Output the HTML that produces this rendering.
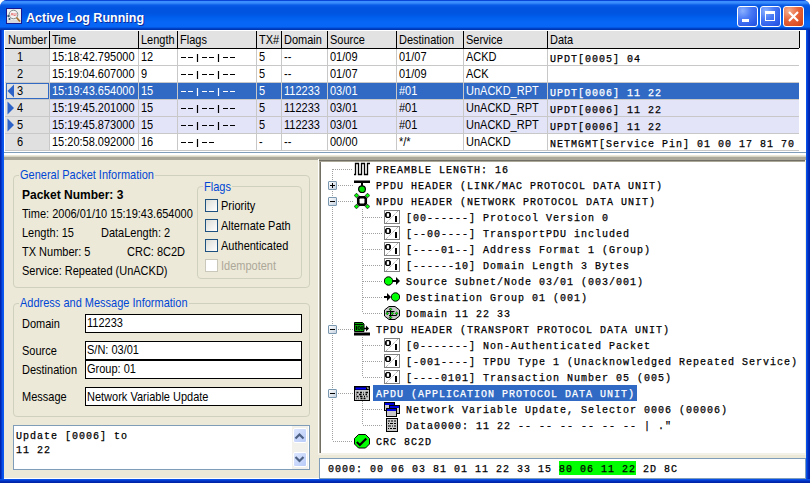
<!DOCTYPE html><html><head><meta charset="utf-8"><style>
*{margin:0;padding:0;box-sizing:border-box}
html,body{width:810px;height:483px;overflow:hidden;background:#fff;font-family:"Liberation Sans",sans-serif;font-size:11px;color:#000}
div,span,svg{position:absolute}
.t{white-space:nowrap;line-height:1}
.s{transform:scaleY(1.12);transform-origin:0 9.3px}
.mono{font-family:"Liberation Mono",monospace;font-size:10px;letter-spacing:1px;-webkit-text-stroke:0.25px}
</style></head><body>
<div style="left:0;top:0;width:810px;height:483px;background:#0842d0;border-radius:7px 7px 0 0"></div>
<div style="left:0;top:0;width:810px;height:30px;border-radius:7px 7px 0 0;background:linear-gradient(#0a46d8 0px,#0a46d8 1px,#3d90ff 1px,#3a8cfc 3px,#0a5ce8 5px,#0054e0 8px,#0054e0 13px,#005eec 17px,#0866f6 22px,#0866f6 27px,#0048d0 28px,#0030a8 30px)"></div>
<div style="left:0;top:30px;width:4px;height:453px;background:linear-gradient(90deg,#0020a8 0,#0028b8 1px,#0848e0 2px,#0a58f0 3px,#0a58f0 4px)"></div>
<div style="left:806px;top:30px;width:4px;height:453px;background:linear-gradient(90deg,#0a58f0 0,#0848e0 1px,#0030c0 2px,#0020a8 4px)"></div>
<div style="left:0;top:479px;width:810px;height:4px;background:linear-gradient(#0a58f0 0,#0848e0 1px,#0030c0 2px,#0020a0 4px)"></div>
<svg style="left:6px;top:8px" width="16" height="16"><rect x="0.5" y="0.5" width="15" height="15" fill="#eef0f0" stroke="#1a1a90"/><rect x="1" y="12" width="14" height="3" fill="#d8d8dc"/><circle cx="2.5" cy="8" r="1.2" fill="#3a5a70"/><circle cx="3.5" cy="11" r="1" fill="#2a4a6a"/><circle cx="7.5" cy="6.5" r="4.3" fill="#f4f4f4" stroke="#808888" stroke-width="1"/><path d="M5 7.5l1-2.5 1 2.5M8 5v2.5h1.5M10 5v2.5" stroke="#e05050" stroke-width="0.7" fill="none"/><path d="M10.5 9.5L14 13.5" stroke="#a8702e" stroke-width="1.8"/></svg>
<div class="t" style="left:26px;top:12px;color:#fff;font-weight:bold;font-size:12.5px;text-shadow:1px 1px 0 #0b2a9a">Active Log Running</div>
<div style="left:737px;top:6px;width:21px;height:21px;border:1px solid #fff;border-radius:3px;background:radial-gradient(circle at 25% 20%,#8ab0ff,#4a7af5 40%,#2a5ae8 80%,#2050d8)"></div>
<div style="left:760px;top:6px;width:21px;height:21px;border:1px solid #fff;border-radius:3px;background:radial-gradient(circle at 25% 20%,#8ab0ff,#4a7af5 40%,#2a5ae8 80%,#2050d8)"></div>
<div style="left:742px;top:19px;width:7px;height:3px;background:#fff"></div>
<div style="left:765px;top:11px;width:10px;height:10px;border:1px solid #fff;border-top-width:3px"></div>
<div style="left:783px;top:6px;width:21px;height:21px;border:1px solid #fff;border-radius:3px;background:radial-gradient(circle at 25% 20%,#f5b090,#e8643a 45%,#d84a1e 85%,#c83c14)"></div>
<svg style="left:783px;top:6px" width="21" height="21"><path d="M6 6L15 15M15 6L6 15" stroke="#fff" stroke-width="2.2"/></svg>
<div style="left:4px;top:30px;width:802px;height:449px;background:#ece9d8"></div>
<div style="left:4px;top:478px;width:802px;height:1px;background:#fff"></div>
<div style="left:4px;top:30px;width:802px;height:123px;background:#fff"></div>
<div style="left:4px;top:152px;width:802px;height:1px;background:#7f9db9"></div>
<div style="left:5px;top:31px;width:794px;height:17px;background:#e2e2e2"></div>
<div style="left:5px;top:48px;width:794px;height:1px;background:#000"></div>
<div style="left:49px;top:31px;width:1px;height:17px;background:#000"></div>
<div class="t s" style="left:8px;top:35px">Number</div>
<div style="left:138px;top:31px;width:1px;height:17px;background:#000"></div>
<div class="t s" style="left:52px;top:35px">Time</div>
<div style="left:177px;top:31px;width:1px;height:17px;background:#000"></div>
<div class="t s" style="left:141px;top:35px">Length</div>
<div style="left:256px;top:31px;width:1px;height:17px;background:#000"></div>
<div class="t s" style="left:180px;top:35px">Flags</div>
<div style="left:281px;top:31px;width:1px;height:17px;background:#000"></div>
<div class="t s" style="left:259px;top:35px">TX#</div>
<div style="left:327px;top:31px;width:1px;height:17px;background:#000"></div>
<div class="t s" style="left:284px;top:35px">Domain</div>
<div style="left:396px;top:31px;width:1px;height:17px;background:#000"></div>
<div class="t s" style="left:330px;top:35px">Source</div>
<div style="left:463px;top:31px;width:1px;height:17px;background:#000"></div>
<div class="t s" style="left:399px;top:35px">Destination</div>
<div style="left:547px;top:31px;width:1px;height:17px;background:#000"></div>
<div class="t s" style="left:466px;top:35px">Service</div>
<div style="left:799px;top:31px;width:1px;height:17px;background:#000"></div>
<div class="t s" style="left:550px;top:35px">Data</div>
<div style="left:49px;top:49px;width:750px;height:16px;background:#fff"></div>
<div style="left:5px;top:49px;width:44px;height:16px;background:#e0e0e0"></div>
<div style="left:5px;top:65px;width:794px;height:1px;background:#c8c8c8"></div>
<div style="left:49px;top:49px;width:1px;height:16px;background:#c8c8c8"></div>
<div style="left:138px;top:49px;width:1px;height:16px;background:#c8c8c8"></div>
<div style="left:177px;top:49px;width:1px;height:16px;background:#c8c8c8"></div>
<div style="left:256px;top:49px;width:1px;height:16px;background:#c8c8c8"></div>
<div style="left:281px;top:49px;width:1px;height:16px;background:#c8c8c8"></div>
<div style="left:327px;top:49px;width:1px;height:16px;background:#c8c8c8"></div>
<div style="left:396px;top:49px;width:1px;height:16px;background:#c8c8c8"></div>
<div style="left:463px;top:49px;width:1px;height:16px;background:#c8c8c8"></div>
<div style="left:547px;top:49px;width:1px;height:16px;background:#c8c8c8"></div>
<div class="t s" style="left:17px;top:52px">1</div>
<div class="t s" style="left:52px;top:52px;color:#000">15:18:42.795000</div>
<div class="t s" style="left:141px;top:52px;color:#000">12</div>
<svg style="left:177px;top:49px" width="70" height="16"><path d="M4 8.5h5M11 8.5h5M25 8.5h5M32 8.5h5M46 8.5h5M53 8.5h5M20.5 5v8M41.5 5v8" stroke="#000" stroke-width="1.2"/></svg>
<div class="t s" style="left:259px;top:52px;color:#000">5</div>
<div class="t s" style="left:284px;top:52px;color:#000">--</div>
<div class="t s" style="left:330px;top:52px;color:#000">01/09</div>
<div class="t s" style="left:399px;top:52px;color:#000">01/07</div>
<div class="t s" style="left:466px;top:52px;color:#000">ACKD</div>
<div class="t mono" style="left:550px;top:55px;color:#000">UPDT[0005] 04</div>
<div style="left:49px;top:66px;width:750px;height:16px;background:#fff"></div>
<div style="left:5px;top:66px;width:44px;height:16px;background:#e0e0e0"></div>
<div style="left:5px;top:82px;width:794px;height:1px;background:#c8c8c8"></div>
<div style="left:49px;top:66px;width:1px;height:16px;background:#c8c8c8"></div>
<div style="left:138px;top:66px;width:1px;height:16px;background:#c8c8c8"></div>
<div style="left:177px;top:66px;width:1px;height:16px;background:#c8c8c8"></div>
<div style="left:256px;top:66px;width:1px;height:16px;background:#c8c8c8"></div>
<div style="left:281px;top:66px;width:1px;height:16px;background:#c8c8c8"></div>
<div style="left:327px;top:66px;width:1px;height:16px;background:#c8c8c8"></div>
<div style="left:396px;top:66px;width:1px;height:16px;background:#c8c8c8"></div>
<div style="left:463px;top:66px;width:1px;height:16px;background:#c8c8c8"></div>
<div style="left:547px;top:66px;width:1px;height:16px;background:#c8c8c8"></div>
<div class="t s" style="left:17px;top:69px">2</div>
<div class="t s" style="left:52px;top:69px;color:#000">15:19:04.607000</div>
<div class="t s" style="left:141px;top:69px;color:#000">9</div>
<svg style="left:177px;top:66px" width="70" height="16"><path d="M4 8.5h5M11 8.5h5M25 8.5h5M32 8.5h5M46 8.5h5M53 8.5h5M20.5 5v8M41.5 5v8" stroke="#000" stroke-width="1.2"/></svg>
<div class="t s" style="left:259px;top:69px;color:#000">5</div>
<div class="t s" style="left:284px;top:69px;color:#000">--</div>
<div class="t s" style="left:330px;top:69px;color:#000">01/07</div>
<div class="t s" style="left:399px;top:69px;color:#000">01/09</div>
<div class="t s" style="left:466px;top:69px;color:#000">ACK</div>
<div class="t mono" style="left:550px;top:72px;color:#000"></div>
<div style="left:49px;top:83px;width:750px;height:16px;background:#316ac5"></div>
<div style="left:5px;top:83px;width:44px;height:16px;background:#e0e0e0"></div>
<div style="left:6px;top:83px;width:43px;height:16px;border:1px solid #316ac5"></div>
<div style="left:5px;top:99px;width:794px;height:1px;background:#c8c8c8"></div>
<div style="left:49px;top:83px;width:1px;height:16px;background:#c8c8c8"></div>
<div style="left:138px;top:83px;width:1px;height:16px;background:#c8c8c8"></div>
<div style="left:177px;top:83px;width:1px;height:16px;background:#c8c8c8"></div>
<div style="left:256px;top:83px;width:1px;height:16px;background:#c8c8c8"></div>
<div style="left:281px;top:83px;width:1px;height:16px;background:#c8c8c8"></div>
<div style="left:327px;top:83px;width:1px;height:16px;background:#c8c8c8"></div>
<div style="left:396px;top:83px;width:1px;height:16px;background:#c8c8c8"></div>
<div style="left:463px;top:83px;width:1px;height:16px;background:#c8c8c8"></div>
<div style="left:547px;top:83px;width:1px;height:16px;background:#c8c8c8"></div>
<div class="t s" style="left:17px;top:86px">3</div>
<svg style="left:7px;top:83px" width="8" height="16"><path d="M7 1.5L7 14.5L0.5 8Z" fill="#2d63c8"/></svg>
<div class="t s" style="left:52px;top:86px;color:#fff">15:19:43.654000</div>
<div class="t s" style="left:141px;top:86px;color:#fff">15</div>
<svg style="left:177px;top:83px" width="70" height="16"><path d="M4 8.5h5M11 8.5h5M25 8.5h5M32 8.5h5M46 8.5h5M53 8.5h5M20.5 5v8M41.5 5v8" stroke="#fff" stroke-width="1.2"/></svg>
<div class="t s" style="left:259px;top:86px;color:#fff">5</div>
<div class="t s" style="left:284px;top:86px;color:#fff">112233</div>
<div class="t s" style="left:330px;top:86px;color:#fff">03/01</div>
<div class="t s" style="left:399px;top:86px;color:#fff">#01</div>
<div class="t s" style="left:466px;top:86px;color:#fff">UnACKD_RPT</div>
<div class="t mono" style="left:550px;top:89px;color:#fff">UPDT[0006] 11 22</div>
<div style="left:49px;top:100px;width:750px;height:16px;background:#e4e4f8"></div>
<div style="left:5px;top:100px;width:44px;height:16px;background:#e0e0e0"></div>
<div style="left:5px;top:116px;width:794px;height:1px;background:#c8c8c8"></div>
<div style="left:49px;top:100px;width:1px;height:16px;background:#c8c8c8"></div>
<div style="left:138px;top:100px;width:1px;height:16px;background:#c8c8c8"></div>
<div style="left:177px;top:100px;width:1px;height:16px;background:#c8c8c8"></div>
<div style="left:256px;top:100px;width:1px;height:16px;background:#c8c8c8"></div>
<div style="left:281px;top:100px;width:1px;height:16px;background:#c8c8c8"></div>
<div style="left:327px;top:100px;width:1px;height:16px;background:#c8c8c8"></div>
<div style="left:396px;top:100px;width:1px;height:16px;background:#c8c8c8"></div>
<div style="left:463px;top:100px;width:1px;height:16px;background:#c8c8c8"></div>
<div style="left:547px;top:100px;width:1px;height:16px;background:#c8c8c8"></div>
<div class="t s" style="left:17px;top:103px">4</div>
<svg style="left:7px;top:100px" width="8" height="16"><path d="M0.5 1.5L0.5 14.5L7 8Z" fill="#2d63c8"/></svg>
<div class="t s" style="left:52px;top:103px;color:#000">15:19:45.201000</div>
<div class="t s" style="left:141px;top:103px;color:#000">15</div>
<svg style="left:177px;top:100px" width="70" height="16"><path d="M4 8.5h5M11 8.5h5M25 8.5h5M32 8.5h5M46 8.5h5M53 8.5h5M20.5 5v8M41.5 5v8" stroke="#000" stroke-width="1.2"/></svg>
<div class="t s" style="left:259px;top:103px;color:#000">5</div>
<div class="t s" style="left:284px;top:103px;color:#000">112233</div>
<div class="t s" style="left:330px;top:103px;color:#000">03/01</div>
<div class="t s" style="left:399px;top:103px;color:#000">#01</div>
<div class="t s" style="left:466px;top:103px;color:#000">UnACKD_RPT</div>
<div class="t mono" style="left:550px;top:106px;color:#000">UPDT[0006] 11 22</div>
<div style="left:49px;top:117px;width:750px;height:16px;background:#e4e4f8"></div>
<div style="left:5px;top:117px;width:44px;height:16px;background:#e0e0e0"></div>
<div style="left:5px;top:133px;width:794px;height:1px;background:#c8c8c8"></div>
<div style="left:49px;top:117px;width:1px;height:16px;background:#c8c8c8"></div>
<div style="left:138px;top:117px;width:1px;height:16px;background:#c8c8c8"></div>
<div style="left:177px;top:117px;width:1px;height:16px;background:#c8c8c8"></div>
<div style="left:256px;top:117px;width:1px;height:16px;background:#c8c8c8"></div>
<div style="left:281px;top:117px;width:1px;height:16px;background:#c8c8c8"></div>
<div style="left:327px;top:117px;width:1px;height:16px;background:#c8c8c8"></div>
<div style="left:396px;top:117px;width:1px;height:16px;background:#c8c8c8"></div>
<div style="left:463px;top:117px;width:1px;height:16px;background:#c8c8c8"></div>
<div style="left:547px;top:117px;width:1px;height:16px;background:#c8c8c8"></div>
<div class="t s" style="left:17px;top:120px">5</div>
<svg style="left:7px;top:117px" width="8" height="16"><path d="M0.5 1.5L0.5 14.5L7 8Z" fill="#2d63c8"/></svg>
<div class="t s" style="left:52px;top:120px;color:#000">15:19:45.873000</div>
<div class="t s" style="left:141px;top:120px;color:#000">15</div>
<svg style="left:177px;top:117px" width="70" height="16"><path d="M4 8.5h5M11 8.5h5M25 8.5h5M32 8.5h5M46 8.5h5M53 8.5h5M20.5 5v8M41.5 5v8" stroke="#000" stroke-width="1.2"/></svg>
<div class="t s" style="left:259px;top:120px;color:#000">5</div>
<div class="t s" style="left:284px;top:120px;color:#000">112233</div>
<div class="t s" style="left:330px;top:120px;color:#000">03/01</div>
<div class="t s" style="left:399px;top:120px;color:#000">#01</div>
<div class="t s" style="left:466px;top:120px;color:#000">UnACKD_RPT</div>
<div class="t mono" style="left:550px;top:123px;color:#000">UPDT[0006] 11 22</div>
<div style="left:49px;top:134px;width:750px;height:16px;background:#fff"></div>
<div style="left:5px;top:134px;width:44px;height:16px;background:#e0e0e0"></div>
<div style="left:5px;top:150px;width:794px;height:1px;background:#c8c8c8"></div>
<div style="left:49px;top:134px;width:1px;height:16px;background:#c8c8c8"></div>
<div style="left:138px;top:134px;width:1px;height:16px;background:#c8c8c8"></div>
<div style="left:177px;top:134px;width:1px;height:16px;background:#c8c8c8"></div>
<div style="left:256px;top:134px;width:1px;height:16px;background:#c8c8c8"></div>
<div style="left:281px;top:134px;width:1px;height:16px;background:#c8c8c8"></div>
<div style="left:327px;top:134px;width:1px;height:16px;background:#c8c8c8"></div>
<div style="left:396px;top:134px;width:1px;height:16px;background:#c8c8c8"></div>
<div style="left:463px;top:134px;width:1px;height:16px;background:#c8c8c8"></div>
<div style="left:547px;top:134px;width:1px;height:16px;background:#c8c8c8"></div>
<div class="t s" style="left:17px;top:137px">6</div>
<div class="t s" style="left:52px;top:137px;color:#000">15:20:58.092000</div>
<div class="t s" style="left:141px;top:137px;color:#000">16</div>
<svg style="left:177px;top:134px" width="70" height="16"><path d="M4 8.5h5M11 8.5h5M25 8.5h5M32 8.5h5M20.5 5v8" stroke="#000" stroke-width="1.2"/></svg>
<div class="t s" style="left:259px;top:137px;color:#000">-</div>
<div class="t s" style="left:284px;top:137px;color:#000">--</div>
<div class="t s" style="left:330px;top:137px;color:#000">00/00</div>
<div class="t s" style="left:399px;top:137px;color:#000">*/*</div>
<div class="t s" style="left:466px;top:137px;color:#000">UnACKD</div>
<div class="t mono" style="left:550px;top:140px;color:#000">NETMGMT[Service Pin] 01 00 17 81 70</div>
<div style="left:4px;top:153px;width:802px;height:2px;background:#fff"></div>
<div style="left:4px;top:156px;width:802px;height:1px;background:#d8d4c4"></div>
<div style="left:4px;top:157px;width:802px;height:3px;background:#aca899"></div>
<div style="left:13px;top:175px;width:297px;height:113px;border:1px solid #d0d0bf;border-radius:4px"></div>
<div class="t s" style="left:19px;top:170px;padding:0 1px;background:#ece9d8;color:#0046d5">General Packet Information</div>
<div class="t" style="left:22px;top:189px;font-weight:bold;font-size:12px">Packet Number: 3</div>
<div class="t s" style="left:22px;top:209px">Time: 2006/01/10 15:19:43.654000</div>
<div class="t s" style="left:22px;top:228px">Length: 15</div>
<div class="t s" style="left:101px;top:228px">DataLength: 2</div>
<div class="t s" style="left:22px;top:247px">TX Number: 5</div>
<div class="t s" style="left:127px;top:247px">CRC: 8C2D</div>
<div class="t s" style="left:22px;top:266px">Service: Repeated (UnACKD)</div>
<div style="left:197px;top:186px;width:105px;height:93px;border:1px solid #d0d0bf;border-radius:4px"></div>
<div class="t s" style="left:203px;top:182px;padding:0 1px;background:#ece9d8;color:#0046d5">Flags</div>
<div style="left:205px;top:199px;width:13px;height:13px;border:1px solid #1c5180;background:linear-gradient(135deg,#dcdcd7,#fff)"></div>
<div class="t s" style="left:221px;top:201px;color:#000">Priority</div>
<div style="left:205px;top:219px;width:13px;height:13px;border:1px solid #1c5180;background:linear-gradient(135deg,#dcdcd7,#fff)"></div>
<div class="t s" style="left:221px;top:221px;color:#000">Alternate Path</div>
<div style="left:205px;top:239px;width:13px;height:13px;border:1px solid #1c5180;background:linear-gradient(135deg,#dcdcd7,#fff)"></div>
<div class="t s" style="left:221px;top:241px;color:#000">Authenticated</div>
<div style="left:205px;top:259px;width:13px;height:13px;border:1px solid #cac8bb;background:#fff"></div>
<div class="t s" style="left:221px;top:261px;color:#aca899">Idempotent</div>
<div style="left:13px;top:303px;width:297px;height:114px;border:1px solid #d0d0bf;border-radius:4px"></div>
<div class="t s" style="left:19px;top:298px;padding:0 1px;background:#ece9d8;color:#0046d5">Address and Message Information</div>
<div class="t s" style="left:22px;top:319px">Domain</div>
<div style="left:85px;top:314px;width:217px;height:19px;background:#fff;border:1px solid #000"></div>
<div class="t s" style="left:87px;top:318px">112233</div>
<div class="t s" style="left:22px;top:346px">Source</div>
<div style="left:85px;top:341px;width:217px;height:19px;background:#fff;border:1px solid #000"></div>
<div class="t s" style="left:87px;top:345px">S/N: 03/01</div>
<div class="t s" style="left:22px;top:365px">Destination</div>
<div style="left:85px;top:360px;width:217px;height:19px;background:#fff;border:1px solid #000"></div>
<div class="t s" style="left:87px;top:364px">Group: 01</div>
<div class="t s" style="left:22px;top:392px">Message</div>
<div style="left:85px;top:387px;width:217px;height:19px;background:#fff;border:1px solid #000"></div>
<div class="t s" style="left:87px;top:392px">Network Variable Update</div>
<div style="left:13px;top:425px;width:297px;height:45px;background:#fff;border:1px solid #7f9db9"></div>
<div class="t mono" style="left:16px;top:430px;line-height:14px">Update [0006] to<br>11 22</div>
<div style="left:292px;top:426px;width:16px;height:43px;background:#f3f1ec"></div>
<div style="left:293px;top:428px;width:14px;height:15px;border:1px solid #fff;border-radius:2px;background:linear-gradient(135deg,#dce6fe,#b8cbf8)"></div>
<svg style="left:293px;top:428px" width="14" height="15"><path d="M2.5 10.5L6.5 6.5L10.5 10.5" stroke="#4d6185" stroke-width="2.2" fill="none"/></svg>
<div style="left:293px;top:452px;width:14px;height:15px;border:1px solid #fff;border-radius:2px;background:linear-gradient(135deg,#dce6fe,#b8cbf8)"></div>
<svg style="left:293px;top:452px" width="14" height="15"><path d="M2.5 5L6.5 9L10.5 5" stroke="#4d6185" stroke-width="2.2" fill="none"/></svg>
<div style="left:319px;top:160px;width:487px;height:293px;background:#fff;border-left:2px solid #716f64;border-top:1px solid #716f64"></div>
<div style="left:320px;top:161px;width:486px;height:1px;background:#aca899"></div>
<div style="left:318px;top:159px;width:1px;height:296px;background:#fff"></div>
<div style="left:318px;top:453px;width:488px;height:2px;background:#f4f2e8"></div>
<div style="left:805px;top:160px;width:1px;height:294px;background:#f1efe2"></div>
<div style="left:319px;top:161px;width:1px;height:292px;background:#aca899"></div>
<div style="left:319px;top:458px;width:487px;height:21px;background:#fff;border:1px solid #7f9db9"></div>
<div style="left:559px;top:461px;width:77px;height:14px;background:#00ff00"></div>
<div class="t mono" style="left:328px;top:465px">0000: 00 06 03 81 01 11 22 33 15 80 06 11 22 2D 8C</div>
<div style="left:332px;top:169px;width:1px;height:272px;background:repeating-linear-gradient(#a0a0a0 0 1px,transparent 1px 2px)"></div>
<div style="left:333px;top:169px;width:20px;height:1px;background:repeating-linear-gradient(90deg,#a0a0a0 0 1px,transparent 1px 2px)"></div>
<div style="left:338px;top:185px;width:15px;height:1px;background:repeating-linear-gradient(90deg,#a0a0a0 0 1px,transparent 1px 2px)"></div>
<div style="left:338px;top:201px;width:15px;height:1px;background:repeating-linear-gradient(90deg,#a0a0a0 0 1px,transparent 1px 2px)"></div>
<div style="left:363px;top:217px;width:20px;height:1px;background:repeating-linear-gradient(90deg,#a0a0a0 0 1px,transparent 1px 2px)"></div>
<div style="left:363px;top:233px;width:20px;height:1px;background:repeating-linear-gradient(90deg,#a0a0a0 0 1px,transparent 1px 2px)"></div>
<div style="left:363px;top:249px;width:20px;height:1px;background:repeating-linear-gradient(90deg,#a0a0a0 0 1px,transparent 1px 2px)"></div>
<div style="left:363px;top:265px;width:20px;height:1px;background:repeating-linear-gradient(90deg,#a0a0a0 0 1px,transparent 1px 2px)"></div>
<div style="left:363px;top:281px;width:20px;height:1px;background:repeating-linear-gradient(90deg,#a0a0a0 0 1px,transparent 1px 2px)"></div>
<div style="left:363px;top:297px;width:20px;height:1px;background:repeating-linear-gradient(90deg,#a0a0a0 0 1px,transparent 1px 2px)"></div>
<div style="left:363px;top:313px;width:20px;height:1px;background:repeating-linear-gradient(90deg,#a0a0a0 0 1px,transparent 1px 2px)"></div>
<div style="left:338px;top:329px;width:15px;height:1px;background:repeating-linear-gradient(90deg,#a0a0a0 0 1px,transparent 1px 2px)"></div>
<div style="left:363px;top:345px;width:20px;height:1px;background:repeating-linear-gradient(90deg,#a0a0a0 0 1px,transparent 1px 2px)"></div>
<div style="left:363px;top:361px;width:20px;height:1px;background:repeating-linear-gradient(90deg,#a0a0a0 0 1px,transparent 1px 2px)"></div>
<div style="left:363px;top:377px;width:20px;height:1px;background:repeating-linear-gradient(90deg,#a0a0a0 0 1px,transparent 1px 2px)"></div>
<div style="left:338px;top:393px;width:15px;height:1px;background:repeating-linear-gradient(90deg,#a0a0a0 0 1px,transparent 1px 2px)"></div>
<div style="left:363px;top:409px;width:20px;height:1px;background:repeating-linear-gradient(90deg,#a0a0a0 0 1px,transparent 1px 2px)"></div>
<div style="left:363px;top:425px;width:20px;height:1px;background:repeating-linear-gradient(90deg,#a0a0a0 0 1px,transparent 1px 2px)"></div>
<div style="left:333px;top:441px;width:20px;height:1px;background:repeating-linear-gradient(90deg,#a0a0a0 0 1px,transparent 1px 2px)"></div>
<div style="left:362px;top:209px;width:1px;height:104px;background:repeating-linear-gradient(#a0a0a0 0 1px,transparent 1px 2px)"></div>
<div style="left:362px;top:337px;width:1px;height:40px;background:repeating-linear-gradient(#a0a0a0 0 1px,transparent 1px 2px)"></div>
<div style="left:362px;top:401px;width:1px;height:24px;background:repeating-linear-gradient(#a0a0a0 0 1px,transparent 1px 2px)"></div>
<div class="t mono" style="left:376px;top:166px">PREAMBLE LENGTH: 16</div>
<svg style="left:354px;top:162px" width="16" height="16"><path d="M0 12.5H1.5V1.5H4.5V12.5H7.5V1.5H10.5V12.5H13.5V1.5H16" stroke="#000" stroke-width="1.3" fill="none"/></svg>
<div class="t mono" style="left:376px;top:182px">PPDU HEADER (LINK/MAC PROTOCOL DATA UNIT)</div>
<svg style="left:354px;top:177px" width="16" height="16"><rect x="0" y="3.5" width="16" height="2.5" fill="#000"/><rect x="7" y="5" width="2" height="4" fill="#000"/><circle cx="8" cy="12.2" r="3.4" fill="#00e000" stroke="#000" stroke-width="1.2"/></svg>
<div style="left:328px;top:181px;width:9px;height:9px;border:1px solid #7a98af;border-radius:1px;background:linear-gradient(135deg,#fff,#c6d2e0)"></div>
<div style="left:330px;top:185px;width:5px;height:1px;background:#000"></div>
<div style="left:332px;top:183px;width:1px;height:5px;background:#000"></div>
<div class="t mono" style="left:376px;top:198px">NPDU HEADER (NETWORK PROTOCOL DATA UNIT)</div>
<svg style="left:354px;top:193px" width="16" height="16"><path d="M5.5 4.25H10.5L11.75 5.5V10.5L10.5 11.75H5.5L4.25 10.5V5.5Z" fill="#fff" stroke="#000" stroke-width="2.6"/><path d="M2.5 0.20000000000000018L4.8 2.5L2.5 4.8L0.20000000000000018 2.5Z" fill="#00ff00" stroke="#000" stroke-width="0.7"/><path d="M13.5 0.20000000000000018L15.8 2.5L13.5 4.8L11.2 2.5Z" fill="#00ff00" stroke="#000" stroke-width="0.7"/><path d="M2.5 11.2L4.8 13.5L2.5 15.8L0.20000000000000018 13.5Z" fill="#00ff00" stroke="#000" stroke-width="0.7"/><path d="M13.5 11.2L15.8 13.5L13.5 15.8L11.2 13.5Z" fill="#00ff00" stroke="#000" stroke-width="0.7"/></svg>
<div style="left:328px;top:197px;width:9px;height:9px;border:1px solid #7a98af;border-radius:1px;background:linear-gradient(135deg,#fff,#c6d2e0)"></div>
<div style="left:330px;top:201px;width:5px;height:1px;background:#000"></div>
<div class="t mono" style="left:406px;top:214px">[00------] Protocol Version 0</div>
<svg style="left:384px;top:210px" width="16" height="16"><rect x="0.5" y="0.5" width="15" height="13" fill="#fff" stroke="#808080"/><path d="M2 13L14 1" stroke="#909090" stroke-dasharray="1 1"/><path d="M2.5 2H5.5L7 3.5V6.5L5.5 8H2.5L1 6.5V3.5ZM2.8 3.2V6.8H5.1V3.2Z" fill="#000" fill-rule="evenodd"/><rect x="11" y="6" width="2" height="6" fill="#000"/></svg>
<div class="t mono" style="left:406px;top:230px">[--00----] TransportPDU included</div>
<svg style="left:384px;top:226px" width="16" height="16"><rect x="0.5" y="0.5" width="15" height="13" fill="#fff" stroke="#808080"/><path d="M2 13L14 1" stroke="#909090" stroke-dasharray="1 1"/><path d="M2.5 2H5.5L7 3.5V6.5L5.5 8H2.5L1 6.5V3.5ZM2.8 3.2V6.8H5.1V3.2Z" fill="#000" fill-rule="evenodd"/><rect x="11" y="6" width="2" height="6" fill="#000"/></svg>
<div class="t mono" style="left:406px;top:246px">[----01--] Address Format 1 (Group)</div>
<svg style="left:384px;top:242px" width="16" height="16"><rect x="0.5" y="0.5" width="15" height="13" fill="#fff" stroke="#808080"/><path d="M2 13L14 1" stroke="#909090" stroke-dasharray="1 1"/><path d="M2.5 2H5.5L7 3.5V6.5L5.5 8H2.5L1 6.5V3.5ZM2.8 3.2V6.8H5.1V3.2Z" fill="#000" fill-rule="evenodd"/><rect x="11" y="6" width="2" height="6" fill="#000"/></svg>
<div class="t mono" style="left:406px;top:262px">[------10] Domain Length 3 Bytes</div>
<svg style="left:384px;top:258px" width="16" height="16"><rect x="0.5" y="0.5" width="15" height="13" fill="#fff" stroke="#808080"/><path d="M2 13L14 1" stroke="#909090" stroke-dasharray="1 1"/><path d="M2.5 2H5.5L7 3.5V6.5L5.5 8H2.5L1 6.5V3.5ZM2.8 3.2V6.8H5.1V3.2Z" fill="#000" fill-rule="evenodd"/><rect x="11" y="6" width="2" height="6" fill="#000"/></svg>
<div class="t mono" style="left:406px;top:278px">Source Subnet/Node 03/01 (003/001)</div>
<svg style="left:384px;top:273px" width="16" height="16"><circle cx="4.5" cy="8" r="4.2" fill="#00ff00" stroke="#000" stroke-width="1"/><rect x="9" y="7" width="3" height="2" fill="#000"/><path d="M12 4L16 8L12 12Z" fill="#000"/></svg>
<div class="t mono" style="left:406px;top:294px">Destination Group 01 (001)</div>
<svg style="left:384px;top:289px" width="16" height="16"><rect x="0" y="7" width="4" height="2" fill="#000"/><path d="M3 4L7 8L3 12Z" fill="#000"/><circle cx="11.5" cy="8" r="4.2" fill="#00ff00" stroke="#000" stroke-width="1"/></svg>
<div class="t mono" style="left:406px;top:310px">Domain 11 22 33</div>
<svg style="left:384px;top:305px" width="16" height="16"><path d="M5 1.5H11L15.5 5V11L11 14.5H5L0.5 11V5Z" fill="#c8c8c8" stroke="#000"/><path d="M2.5 6.5H10.5M5 10.5H12.5M6.5 4V14M12.5 8.5V10.5" stroke="#000" stroke-width="1.1"/><path d="M6.5 2.9L7.9 4.3L6.5 5.699999999999999L5.1 4.3Z" fill="#00ff00" stroke="#000" stroke-width="0.6"/><path d="M3.3 7.0L4.699999999999999 8.4L3.3 9.8L1.9 8.4Z" fill="#00ff00" stroke="#000" stroke-width="0.6"/><path d="M8.3 7.0L9.700000000000001 8.4L8.3 9.8L6.9 8.4Z" fill="#00ff00" stroke="#000" stroke-width="0.6"/><path d="M12.6 7.0L14.0 8.4L12.6 9.8L11.2 8.4Z" fill="#00ff00" stroke="#000" stroke-width="0.6"/><path d="M6.5 11.1L7.9 12.5L6.5 13.9L5.1 12.5Z" fill="#00ff00" stroke="#000" stroke-width="0.6"/></svg>
<div class="t mono" style="left:376px;top:326px">TPDU HEADER (TRANSPORT PROTOCOL DATA UNIT)</div>
<svg style="left:354px;top:322px" width="16" height="16"><path d="M0.5 0.5H8.5L10 2V9.5H0.5Z" fill="#00a000" stroke="#000"/><path d="M1 2.5H9" stroke="#000"/><path d="M2.5 4V8M8 4V8" stroke="#000" stroke-width="1.2"/><ellipse cx="5.2" cy="6" rx="1.2" ry="1.8" fill="none" stroke="#000" stroke-width="0.9"/><path d="M10 6.5H13" stroke="#000" stroke-width="1.5"/><path d="M12 3.5L15 6.5L12 9.5Z" fill="#000"/><rect x="0" y="10.5" width="16" height="3" fill="#000"/></svg>
<div style="left:328px;top:325px;width:9px;height:9px;border:1px solid #7a98af;border-radius:1px;background:linear-gradient(135deg,#fff,#c6d2e0)"></div>
<div style="left:330px;top:329px;width:5px;height:1px;background:#000"></div>
<div class="t mono" style="left:406px;top:342px">[0-------] Non-Authenticated Packet</div>
<svg style="left:384px;top:338px" width="16" height="16"><rect x="0.5" y="0.5" width="15" height="13" fill="#fff" stroke="#808080"/><path d="M2 13L14 1" stroke="#909090" stroke-dasharray="1 1"/><path d="M2.5 2H5.5L7 3.5V6.5L5.5 8H2.5L1 6.5V3.5ZM2.8 3.2V6.8H5.1V3.2Z" fill="#000" fill-rule="evenodd"/><rect x="11" y="6" width="2" height="6" fill="#000"/></svg>
<div class="t mono" style="left:406px;top:358px">[-001----] TPDU Type 1 (Unacknowledged Repeated Service)</div>
<svg style="left:384px;top:354px" width="16" height="16"><rect x="0.5" y="0.5" width="15" height="13" fill="#fff" stroke="#808080"/><path d="M2 13L14 1" stroke="#909090" stroke-dasharray="1 1"/><path d="M2.5 2H5.5L7 3.5V6.5L5.5 8H2.5L1 6.5V3.5ZM2.8 3.2V6.8H5.1V3.2Z" fill="#000" fill-rule="evenodd"/><rect x="11" y="6" width="2" height="6" fill="#000"/></svg>
<div class="t mono" style="left:406px;top:374px">[----0101] Transaction Number 05 (005)</div>
<svg style="left:384px;top:370px" width="16" height="16"><rect x="0.5" y="0.5" width="15" height="13" fill="#fff" stroke="#808080"/><path d="M2 13L14 1" stroke="#909090" stroke-dasharray="1 1"/><path d="M2.5 2H5.5L7 3.5V6.5L5.5 8H2.5L1 6.5V3.5ZM2.8 3.2V6.8H5.1V3.2Z" fill="#000" fill-rule="evenodd"/><rect x="11" y="6" width="2" height="6" fill="#000"/></svg>
<div style="left:373px;top:385px;width:264px;height:16px;background:#316ac5"></div>
<div class="t mono" style="left:376px;top:390px;color:#fff">APDU (APPLICATION PROTOCOL DATA UNIT)</div>
<svg style="left:354px;top:386px" width="16" height="16"><rect x="0.5" y="0.5" width="15" height="14" fill="#c8c8c8" stroke="#000"/><rect x="1" y="1" width="14" height="3" fill="#000"/><rect x="1.5" y="1.5" width="10.5" height="2" fill="#0000ff"/><path d="M12.5 1.5h2v2z" fill="#fff"/><path d="M2.5 6.5H4.5M6 6.5H8M9.5 6.5H10M11.5 6.5H14M2.5 8.5H3M5 8.5H7.5M9 8.5H10M11.5 8.5H13M2.5 10.5H4.5M6 10.5H8.5M10 10.5H11M12.5 10.5H13.5M2.5 12.5H3M4.5 12.5H5M6.5 12.5H8.5M9.5 12.5H11.5" stroke="#000" stroke-width="1.3"/></svg>
<div style="left:328px;top:389px;width:9px;height:9px;border:1px solid #7a98af;border-radius:1px;background:linear-gradient(135deg,#fff,#c6d2e0)"></div>
<div style="left:330px;top:393px;width:5px;height:1px;background:#000"></div>
<div class="t mono" style="left:406px;top:406px">Network Variable Update, Selector 0006 (00006)</div>
<svg style="left:384px;top:402px" width="16" height="16"><rect x="0.5" y="0.5" width="10" height="8" fill="#c8c8c8" stroke="#000"/><rect x="1" y="1" width="9" height="2" fill="#0000e0"/><rect x="5.5" y="3.5" width="10" height="8" fill="#c8c8c8" stroke="#000"/><rect x="6" y="4" width="9" height="2" fill="#0000e0"/><rect x="2.5" y="6.5" width="10" height="8" fill="#c8c8c8" stroke="#000"/><rect x="3" y="7" width="9" height="2" fill="#0000e0"/></svg>
<div class="t mono" style="left:406px;top:422px">Data0000: 11 22 -- -- -- -- -- -- | ."</div>
<svg style="left:384px;top:418px" width="16" height="16"><rect x="2.5" y="0.5" width="11" height="13" fill="#c8c8c8" stroke="#000"/><path d="M4 3H6M7 3H9M10 3H12M4 5.5H5M6 5.5H9M10 5.5H12M4 8H7M8 8H9M10 8H12M4 10.5H5M6 10.5H8M9 10.5H12" stroke="#000" stroke-width="1.1"/></svg>
<div class="t mono" style="left:376px;top:438px">CRC 8C2D</div>
<svg style="left:354px;top:434px" width="16" height="16"><path d="M4.5 0.5H11.5L15.5 4.5V10L11.5 14H4.5L0.5 10V4.5Z" fill="#00ff00" stroke="#000"/><path d="M2.8 8L5.8 11L12.3 4.5" stroke="#000" stroke-width="2.2" fill="none"/></svg>
</body></html>
